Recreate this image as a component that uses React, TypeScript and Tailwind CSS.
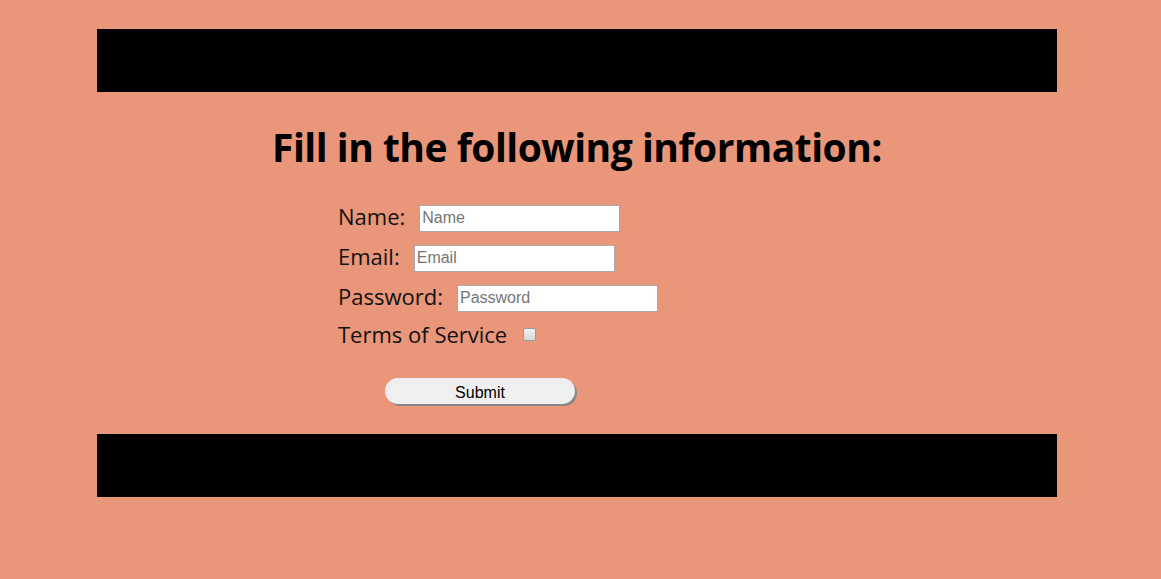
import React from 'react';

export default function App() {
  return (
    <div className="min-h-screen bg-[#e9967a] pt-[29px]" style={{ fontFamily: '"Open Sans", sans-serif' }}>
      <div className="w-[960px] ml-[97px]">
        {/* Header bar */}
        <div className="h-[63px] bg-black" />

        <h1 className="mt-[29px] text-center text-[39px] leading-[52px] font-bold text-black tracking-[-0.5px]">
          Fill in the following information:
        </h1>

        {/* Form */}
        <form className="ml-[241px] mt-[25px] flex flex-col text-[22px] leading-[30px] text-[#111]">
          <div className="flex items-center h-[40px]">
            <label className="mr-[14px] -mt-[4px]">Name:</label>
            <input
              type="text"
              placeholder="Name"
              className="w-[201px] h-[27px] bg-white border border-[#a9a9a9] px-[2px] text-[16px] font-['Liberation_Sans',sans-serif] placeholder-[#757575] outline-none"
            />
          </div>
          <div className="flex items-center h-[40px]">
            <label className="mr-[14px] -mt-[4px]">Email:</label>
            <input
              type="email"
              placeholder="Email"
              className="w-[201px] h-[27px] bg-white border border-[#a9a9a9] px-[2px] text-[16px] font-['Liberation_Sans',sans-serif] placeholder-[#757575] outline-none"
            />
          </div>
          <div className="flex items-center h-[40px]">
            <label className="mr-[14px] -mt-[4px]">Password:</label>
            <input
              type="password"
              placeholder="Password"
              className="w-[201px] h-[27px] bg-white border border-[#a9a9a9] px-[2px] text-[16px] font-['Liberation_Sans',sans-serif] placeholder-[#757575] outline-none"
            />
          </div>
          <div className="flex items-center h-[36px]">
            <label className="mr-[16px] -mt-[4px]">Terms of Service</label>
            <input
              type="checkbox"
              className="appearance-none w-[13px] h-[13px] mb-[3px] rounded-[2px] border border-[#9a9a9a] bg-gradient-to-b from-[#f2f2f2] to-[#d6d6d6]"
            />
          </div>

          <button
            type="button"
            className="mt-[24px] ml-[47px] w-[190px] h-[26px] rounded-full bg-[#efefef] text-black text-[16px] font-['Liberation_Sans',sans-serif] shadow-[2px_2px_0_#888888]"
          >
            Submit
          </button>
        </form>

        {/* Footer bar */}
        <div className="h-[63px] bg-black mt-[30px]" />
      </div>
    </div>
  );
}
